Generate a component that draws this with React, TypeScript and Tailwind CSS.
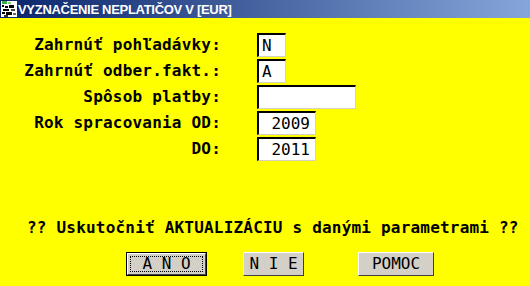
import React from "react";

const mono = { fontFamily: '"DejaVu Sans Mono", "Liberation Mono", monospace' };

function Box({ w, value, align = "left" }: { w: string; value: string; align?: "left" | "right" }) {
  return (
    <div
      className={`${w} h-[24px] bg-white border-t-2 border-l-2 border-b border-r border-t-black border-l-black border-b-[#d4d0c8] border-r-[#d4d0c8] flex items-center text-[16px] text-black ${
        align === "right" ? "justify-end pr-[5px]" : "justify-start pl-[3px]"
      }`}
      style={mono}
    >
      {value}
    </div>
  );
}

function Row({ label, children }: { label: string; children: React.ReactNode }) {
  return (
    <div className="flex items-center h-[26px]">
      <div className="w-[221px] text-right text-[16px] font-bold text-black tracking-[0.2px] whitespace-pre" style={mono}>
        {label}
      </div>
      <div className="ml-[36px]">{children}</div>
    </div>
  );
}

function Btn({ label, w, focused = false, ml }: { label: string; w: string; focused?: boolean; ml: string }) {
  return (
    <div
      className={`${w} ${ml} h-[24px] bg-[#d4d0c8] flex ${
        focused ? "border border-black" : ""
      }`}
    >
      <div className="flex-1 border-t border-l border-t-white border-l-white border-b border-r border-b-[#404040] border-r-[#404040] flex p-[2px]">
        <div
          className={`flex-1 flex items-center justify-center text-[16px] text-black whitespace-pre ${
            focused ? "border border-dotted border-black" : ""
          }`}
          style={mono}
        >
          {label}
        </div>
      </div>
    </div>
  );
}

export default function App() {
  return (
    <div className="w-[530px] h-[286px] bg-[#ffff00] flex flex-col overflow-hidden">
      <div className="h-[18px] flex items-center bg-[linear-gradient(to_right,#0a246a,#86a6da)]">
        <svg width="16" height="16" viewBox="0 0 16 16" className="ml-[1px] shrink-0">
          <rect x="0" y="0" width="16" height="16" fill="#ffffff" />
          <rect x="1" y="0" width="5" height="3" fill="#3fae3f" />
          <rect x="7" y="1" width="3" height="2" fill="#7fcf7f" />
          <rect x="1" y="4" width="2" height="2" fill="#000" />
          <rect x="4" y="5" width="3" height="2" fill="#000" />
          <rect x="8" y="4" width="5" height="3" fill="#000" />
          <rect x="2" y="8" width="6" height="2" fill="#000" />
          <rect x="10" y="8" width="4" height="2" fill="#444" />
          <rect x="1" y="11" width="3" height="2" fill="#000" />
          <rect x="5" y="11" width="6" height="3" fill="#000" />
          <rect x="12" y="12" width="3" height="2" fill="#666" />
          <rect x="3" y="14" width="4" height="2" fill="#333" />
        </svg>
        <span
          className="ml-[1px] text-white font-bold text-[13px] tracking-[-0.3px] leading-none whitespace-pre"
          style={{ fontFamily: '"Liberation Sans", Arial, sans-serif' }}
        >
          VYZNAČENIE NEPLATIČOV V [EUR]
        </span>
      </div>

      <div className="flex flex-col mt-[14px]">
        <Row label="Zahrnúť pohľadávky:">
          <Box w="w-[29px]" value="N" />
        </Row>
        <Row label="Zahrnúť odber.fakt.:">
          <Box w="w-[29px]" value="A" />
        </Row>
        <Row label="Spôsob platby:">
          <Box w="w-[99px]" value="" />
        </Row>
        <Row label="Rok spracovania OD:">
          <Box w="w-[59px]" value="2009" align="right" />
        </Row>
        <Row label="DO:">
          <Box w="w-[59px]" value="2011" align="right" />
        </Row>
      </div>

      <div
        className="mt-[57px] ml-[27px] text-[16px] font-bold text-black tracking-[0.2px] whitespace-pre leading-[18px]"
        style={mono}
      >
        ?? Uskutočniť AKTUALIZÁCIU s danými parametrami ??
      </div>

      <div className="flex mt-[15px]">
        <Btn label="A N O" w="w-[81px]" ml="ml-[126px]" focused />
        <Btn label="N I E" w="w-[61px]" ml="ml-[36px]" />
        <Btn label="POMOC" w="w-[76px]" ml="ml-[54px]" />
      </div>
    </div>
  );
}
